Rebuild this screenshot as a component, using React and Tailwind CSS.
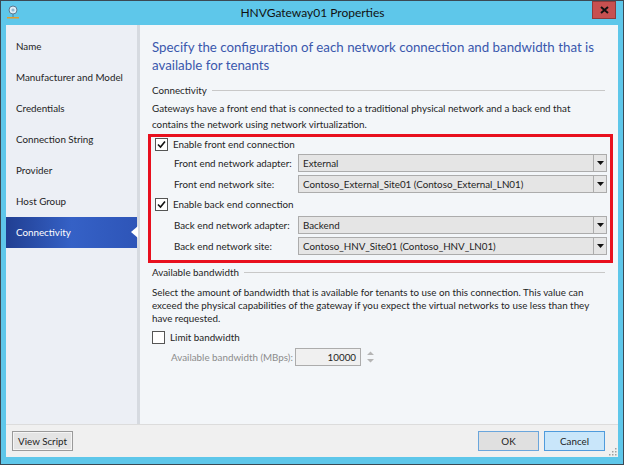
import { useState } from 'react'

const navItems = [
  'Name',
  'Manufacturer and Model',
  'Credentials',
  'Connection String',
  'Provider',
  'Host Group',
  'Connectivity',
]

const Check = ({ checked }) => (
  <span className="w-[13px] h-[13px] border border-[#555] bg-white flex items-center justify-center shrink-0">
    {checked && (
      <svg width="9" height="9" viewBox="0 0 9 9">
        <path d="M1 4.5 L3.5 7 L8 1.5" fill="none" stroke="#111" strokeWidth="1.6" />
      </svg>
    )}
  </span>
)

const Dropdown = ({ value }) => (
  <div className="w-[309px] h-[18px] flex border border-[#acacac] bg-[#e5e5e5]">
    <span className="flex-1 px-[4px] leading-[16px] truncate">{value}</span>
    <span className="w-[13px] border-l border-[#acacac] flex items-center justify-center">
      <svg width="7" height="4" viewBox="0 0 7 4">
        <path d="M0 0 H7 L3.5 4 Z" fill="#111" />
      </svg>
    </span>
  </div>
)

const Row = ({ label, value }) => (
  <div className="flex items-center h-[18px] pl-[19px]">
    <span className="w-[124px] whitespace-nowrap">{label}</span>
    <Dropdown value={value} />
  </div>
)

const SectionLabel = ({ text }) => (
  <div className="flex items-center gap-[5px] pr-[13px] h-[14px]">
    <span className="whitespace-nowrap">{text}</span>
    <span className="flex-1 h-px bg-[#c8c8c8]" />
  </div>
)

export default function App() {
  const [selected] = useState('Connectivity')

  return (
    <div className="w-[624px] h-[465px] bg-[#5ec7ea] border border-[#3b4954] flex flex-col text-[9.8px] text-[#1e1e1e] font-['Lato',sans-serif] overflow-hidden">
      {/* title bar */}
      <div className="h-[24px] flex items-start shrink-0">
        <div className="w-[24px] h-[22px] flex items-center justify-center">
          <svg width="14" height="14" viewBox="0 0 14 14">
            <circle cx="7" cy="5" r="4" fill="#dfeef7" stroke="#5b7a92" strokeWidth="1" />
            <circle cx="7" cy="5" r="1.6" fill="#8fb6d0" />
            <path d="M7 9 V12" stroke="#5b7a92" strokeWidth="1" />
            <rect x="1" y="12" width="12" height="1.5" fill="#e29b2c" />
          </svg>
        </div>
        <div className="flex-1 text-center text-[12px] leading-[24px] text-[#111] pl-[8px]">HNVGateway01 Properties</div>
        <div className="w-[24px] h-[18px] mr-[7px] bg-[#c75050] border border-[#8f3b3b] flex items-center justify-center">
          <svg width="9" height="8" viewBox="0 0 9 8">
            <path d="M1 1 L8 7 M8 1 L1 7" stroke="#111" strokeWidth="2" />
          </svg>
        </div>
      </div>

      {/* body */}
      <div className="flex-1 mx-[5px] flex flex-col bg-[#f0f0f0]">
        <div className="flex-1 flex min-h-0">
          <div className="w-[131px] shrink-0 bg-[#eceff5] pt-[6px]">
            {navItems.map(item => (
              <div
                key={item}
                className={
                  item === selected
                    ? 'relative h-[31px] flex items-center pl-[10px] whitespace-nowrap text-white bg-gradient-to-r from-[#213f92] via-[#3561c6] to-[#2e55b8]'
                    : 'h-[31px] flex items-center pl-[10px] whitespace-nowrap'
                }
              >
                {item}
                {item === selected && (
                  <span className="absolute right-[-1px] top-[9px] w-0 h-0 border-y-[6px] border-y-transparent border-r-[7px] border-r-white" />
                )}
              </div>
            ))}
          </div>
          <div className="w-[3px] shrink-0 bg-[#d6dae0]" />
          <div className="flex-1 min-w-0 bg-[#f3f6f9] pl-[12px] pt-[13px]">
            <div className="text-[13.3px] leading-[18px] text-[#3a58ad] whitespace-nowrap">
              Specify the configuration of each network connection and bandwidth that is
              <br />
              available for tenants
            </div>
            <div className="mt-[9px]">
              <SectionLabel text="Connectivity" />
            </div>
            <div className="mt-[3px] leading-[16px] whitespace-nowrap">
              Gateways have a front end that is connected to a traditional physical network and a back end that
              <br />
              contains the network using network virtualization.
            </div>
            <div className="mt-[2px] ml-[-4px] w-[465px] border-[3px] border-[#e8101e] pl-[4px] pb-[5px] flex flex-col gap-[3px]">
              <div className="flex items-center gap-[5px] h-[14px]">
                <Check checked />
                <span>Enable front end connection</span>
              </div>
              <Row label="Front end network adapter:" value="External" />
              <Row label="Front end network site:" value="Contoso_External_Site01 (Contoso_External_LN01)" />
              <div className="flex items-center gap-[5px] h-[17px]">
                <Check checked />
                <span>Enable back end connection</span>
              </div>
              <Row label="Back end network adapter:" value="Backend" />
              <Row label="Back end network site:" value="Contoso_HNV_Site01 (Contoso_HNV_LN01)" />
            </div>
            <div className="mt-[2px]">
              <SectionLabel text="Available bandwidth" />
            </div>
            <div className="mt-[7px] leading-[13px] whitespace-nowrap">
              Select the amount of bandwidth that is available for tenants to use on this connection. This value can
              <br />
              exceed the physical capabilities of the gateway if you expect the virtual networks to use less than they
              <br />
              have requested.
            </div>
            <div className="flex items-center gap-[5px] h-[14px] mt-[5px]">
              <Check />
              <span>Limit bandwidth</span>
            </div>
            <div className="flex items-center h-[18px] mt-[4px] pl-[19px] text-[#8c8c8c]">
              <span className="w-[124px] whitespace-nowrap">Available bandwidth (MBps):</span>
              <div className="w-[66px] h-[18px] border border-[#acacac] bg-[#f0f0f0] text-right pr-[4px] leading-[16px] text-[#1e1e1e]">10000</div>
              <svg width="7" height="12" viewBox="0 0 7 12" className="ml-[6px]">
                <path d="M0 4 L3.5 0.5 L7 4 Z M0 8 L3.5 11.5 L7 8 Z" fill="#b5b5b5" />
              </svg>
            </div>
          </div>
        </div>

        {/* footer */}
        <div className="h-[33px] shrink-0 border-t border-[#dcdcdc] bg-[#f0f0f0] flex items-center px-[6px] relative">
          <button className="w-[61px] h-[20px] border border-[#9a9a9a] bg-[#e4e4e4] shadow-[inset_0_0_0_1px_#f5f5f5]">View Script</button>
          <div className="flex-1" />
          <button className="w-[61px] h-[20px] border border-[#6aa6dc] bg-[#e0e0e0] mr-[5px]">OK</button>
          <button className="w-[61px] h-[20px] border border-[#4f9bdc] bg-[#c9e6fa] mr-[7px]">Cancel</button>
          <svg width="8" height="8" viewBox="0 0 8 8" className="absolute right-[1px] bottom-[1px]">
            <g fill="#a0a0a0">
              <rect x="6" y="0" width="1.5" height="1.5" />
              <rect x="3" y="3" width="1.5" height="1.5" />
              <rect x="6" y="3" width="1.5" height="1.5" />
              <rect x="0" y="6" width="1.5" height="1.5" />
              <rect x="3" y="6" width="1.5" height="1.5" />
              <rect x="6" y="6" width="1.5" height="1.5" />
            </g>
          </svg>
        </div>
      </div>
      <div className="h-[7px] shrink-0" />
    </div>
  )
}
